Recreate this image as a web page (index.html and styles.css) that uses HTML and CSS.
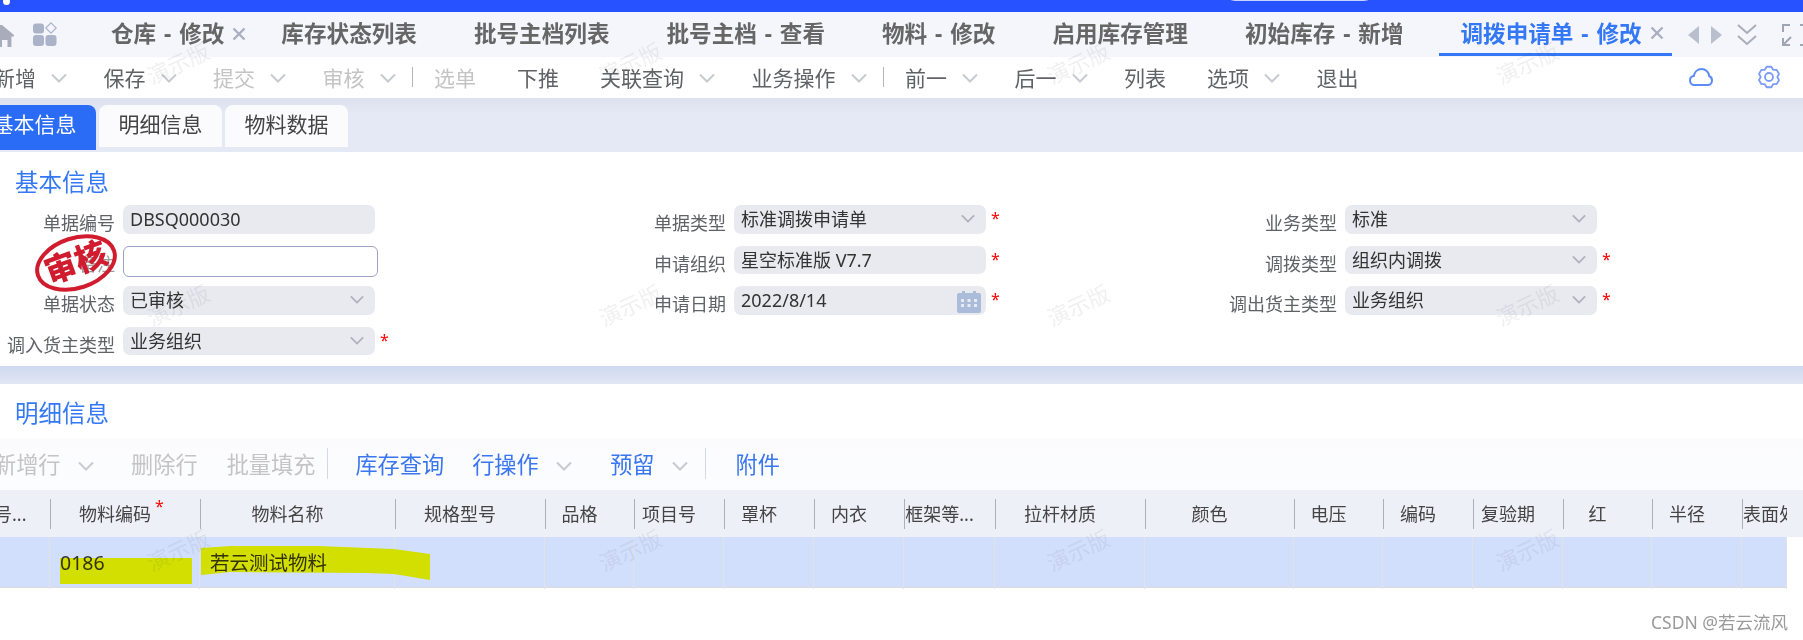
FILE: index.html
```html
<!DOCTYPE html>
<html lang="zh">
<head>
<meta charset="utf-8">
<title>调拨申请单 - 修改</title>
<link rel="stylesheet" href="styles.css">
</head>
<body>
<svg class="defs" width="0" height="0" aria-hidden="true">
  <symbol id="chev" viewBox="0 0 16 10"><polyline points="1,1.5 8,8.5 15,1.5" fill="none" stroke="currentColor" stroke-width="2"/></symbol>
  <symbol id="close" viewBox="0 0 14 14"><path d="M1.5 1.5 12.5 12.5M12.5 1.5 1.5 12.5" fill="none" stroke="currentColor" stroke-width="2.4"/></symbol>
</svg>
<div class="page">
  <div class="topbar"><span class="dot"></span><span class="search"></span></div>

  <nav class="tabbar">
    <svg class="home" width="14" height="22" viewBox="0 0 14 22"><path d="M2 0 14 10v1.5h-2.6V22H7.5v-7H2v7H-4V0z" fill="#a9adbb"/></svg>
    <svg class="apps" width="24" height="24" viewBox="0 0 24 24"><rect x="0" y="1.500" width="11" height="10" rx="3" fill="#aab3c8"/><rect x="0" y="13" width="11" height="11" rx="3" fill="#aab3c8"/><rect x="12.500" y="13" width="11" height="11" rx="3" fill="#aab3c8"/><path d="M18 .8 23.200 6 18 11.200 12.800 6z" fill="none" stroke="#aab3c8" stroke-width="1.200"/></svg>
    <div class="tabs">
      <div class="tab closable">仓库 - 修改<svg class="x" width="14" height="14"><use href="#close"/></svg></div>
      <div class="tab">库存状态列表</div>
      <div class="tab">批号主档列表</div>
      <div class="tab">批号主档 - 查看</div>
      <div class="tab">物料 - 修改</div>
      <div class="tab">启用库存管理</div>
      <div class="tab">初始库存 - 新增</div>
      <div class="tab active">调拨申请单 - 修改<svg class="x" width="14" height="14"><use href="#close"/></svg></div>
    </div>
    <div class="tabctl">
      <svg width="34" height="18" viewBox="0 0 34 18"><path d="M11 0V18L0 9z" fill="#b9bfcd"/><path d="M23 0V18L34 9z" fill="#b9bfcd"/></svg>
      <svg class="dbl" width="20" height="22" viewBox="0 0 20 22"><path d="M1 1 10 9 19 1M1 12 10 20 19 12" fill="none" stroke="#a9adb9" stroke-width="2"/></svg>
      <svg class="full" width="25" height="22" viewBox="0 0 25 22"><path d="M1 8V1H8M18 1H25M1 14V21H8M18 21H25M2 20 9 13" fill="none" stroke="#a0a5b4" stroke-width="2"/></svg>
    </div>
  </nav>

  <div class="toolbar">
    <div class="tool">新增<svg class="chev"><use href="#chev"/></svg></div>
    <div class="tool">保存<svg class="chev"><use href="#chev"/></svg></div>
    <div class="tool off">提交<svg class="chev"><use href="#chev"/></svg></div>
    <div class="tool off end">审核<svg class="chev"><use href="#chev"/></svg></div>
    <span class="sep"></span>
    <div class="tool off plain">选单</div>
    <div class="tool plain">下推</div>
    <div class="tool">关联查询<svg class="chev"><use href="#chev"/></svg></div>
    <div class="tool end">业务操作<svg class="chev"><use href="#chev"/></svg></div>
    <span class="sep"></span>
    <div class="tool">前一<svg class="chev"><use href="#chev"/></svg></div>
    <div class="tool">后一<svg class="chev"><use href="#chev"/></svg></div>
    <div class="tool plain">列表</div>
    <div class="tool">选项<svg class="chev"><use href="#chev"/></svg></div>
    <div class="tool">退出</div>
    <div class="toolicons">
      <svg width="24" height="18" viewBox="0 0 24 18"><path d="M6 17H5.500C2.900 17 1 15 1 12.500 1 10.200 2.600 8.400 4.800 8.100 5.500 4 8.600 1 12.500 1 16.600 1 19.800 4 20.200 8 22 8.800 23 10.500 23 12.500 23 15 21 17 18.500 17z" fill="none" stroke="#5d8bf5" stroke-width="2"/></svg>
      <svg width="24" height="24" viewBox="0 0 24 24"><path d="M9.640 1.770H14.360L16.150 4.810 19.680 4.840 22.040 8.930 20.300 12 22.040 15.070 19.680 19.160 16.150 19.190 14.360 22.230H9.640L7.850 19.190 4.320 19.160 1.960 15.070 3.700 12 1.960 8.930 4.320 4.840 7.850 4.810z" fill="none" stroke="#7a9cf5" stroke-width="1.800" stroke-linejoin="round"/><circle cx="12" cy="12" r="4" fill="none" stroke="#7a9cf5" stroke-width="1.800"/></svg>
    </div>
  </div>

  <div class="tabarea">
    <div class="ptab active">基本信息</div>
    <div class="ptab">明细信息</div>
    <div class="ptab">物料数据</div>
  </div>

  <section class="basic">
    <h2 class="title">基本信息</h2>
    <div class="form">
      <div class="item r1"><label>单据编号</label><div class="field">DBSQ000030</div></div>
      <div class="item r1"><label>单据类型</label><div class="field sel">标准调拨申请单<svg class="schev"><use href="#chev"/></svg></div><i class="req">*</i></div>
      <div class="item r1"><label>业务类型</label><div class="field sel">标准<svg class="schev"><use href="#chev"/></svg></div></div>

      <div class="item r2"><label class="faint">备注</label><div class="input"></div>
        <svg class="stamp" width="90" height="64" viewBox="0 0 90 64"><ellipse cx="45" cy="32" rx="40" ry="25" transform="rotate(-18 45 32)" fill="none" stroke="#d01c2e" stroke-width="4"/><text x="45" y="43" text-anchor="middle" transform="rotate(-20 45 32)" class="stamptext">审核</text></svg>
      </div>
      <div class="item r2"><label>申请组织</label><div class="field">星空标准版 V7.7</div><i class="req">*</i></div>
      <div class="item r2"><label>调拨类型</label><div class="field sel">组织内调拨<svg class="schev"><use href="#chev"/></svg></div><i class="req">*</i></div>

      <div class="item r3"><label>单据状态</label><div class="field sel">已审核<svg class="schev"><use href="#chev"/></svg></div></div>
      <div class="item r3"><label>申请日期</label><div class="field sel">2022/8/14<svg class="cal" width="24" height="22" viewBox="0 0 24 22"><path d="M2 2H5V0H8V2H16V0H19V2H22A2 2 0 0 1 24 4V20A2 2 0 0 1 22 22H2A2 2 0 0 1 0 20V4A2 2 0 0 1 2 2Z" fill="#aabcd9"/><path d="M4 8h3v3H4zM10.500 8h3v3h-3zM17 8h3v3h-3zM4 13h3v3H4zM10.500 13h3v3h-3zM17 13h3v3h-3z" fill="#e8eaf0"/></svg></div><i class="req">*</i></div>
      <div class="item r3"><label>调出货主类型</label><div class="field sel">业务组织<svg class="schev"><use href="#chev"/></svg></div><i class="req">*</i></div>

      <div class="item r4"><label>调入货主类型</label><div class="field sel">业务组织<svg class="schev"><use href="#chev"/></svg></div><i class="req">*</i></div>
    </div>
  </section>

  <div class="band"></div>

  <section class="detail">
    <h2 class="title">明细信息</h2>
    <div class="gridbar">
      <div class="gtool off g1">新增行<svg class="chev"><use href="#chev"/></svg></div>
      <div class="gtool off g2">删除行</div>
      <div class="gtool off g3">批量填充</div>
      <span class="gsep s1"></span>
      <div class="gtool g4">库存查询</div>
      <div class="gtool g5">行操作<svg class="chev"><use href="#chev"/></svg></div>
      <div class="gtool g6">预留<svg class="chev"><use href="#chev"/></svg></div>
      <span class="gsep s2"></span>
      <div class="gtool">附件</div>
    </div>
    <div class="thead cols">
      <div class="th first">号...</div>
      <div class="th">物料编码<i class="thstar">*</i></div>
      <div class="th">物料名称</div>
      <div class="th">规格型号</div>
      <div class="th">品格</div>
      <div class="th">项目号</div>
      <div class="th">罩杯</div>
      <div class="th">内衣</div>
      <div class="th">框架等...</div>
      <div class="th">拉杆材质</div>
      <div class="th">颜色</div>
      <div class="th">电压</div>
      <div class="th">编码</div>
      <div class="th">复验期</div>
      <div class="th">红</div>
      <div class="th">半径</div>
      <div class="th clip">表面处理</div>
    </div>
    <div class="trow cols">
      <div class="td"></div>
      <div class="td">0186</div>
      <div class="td">若云测试物料</div>
      <div class="td"></div><div class="td"></div><div class="td"></div><div class="td"></div><div class="td"></div>
      <div class="td"></div><div class="td"></div><div class="td"></div><div class="td"></div><div class="td"></div>
      <div class="td"></div><div class="td"></div><div class="td"></div><div class="td"></div>
      <svg class="marker" width="440" height="51" viewBox="0 0 440 51"><rect x="60" y="21" width="132" height="26" fill="#d4e000"/><polygon points="201,11 231,9 318,9 394,12 430,17 430,43 394,37 367,36 230,35 201,38" fill="#d4e000"/></svg>
    </div>
  </section>

  <div class="credit">CSDN @若云流风</div>

  <div class="wm" style="left:143px;top:45px">演示版</div>
  <div class="wm" style="left:595px;top:45px">演示版</div>
  <div class="wm" style="left:1043px;top:45px">演示版</div>
  <div class="wm" style="left:1492px;top:45px">演示版</div>
  <div class="wm" style="left:143px;top:287px">演示版</div>
  <div class="wm" style="left:595px;top:287px">演示版</div>
  <div class="wm" style="left:1043px;top:287px">演示版</div>
  <div class="wm" style="left:1492px;top:287px">演示版</div>
  <div class="wm" style="left:143px;top:532px">演示版</div>
  <div class="wm" style="left:595px;top:532px">演示版</div>
  <div class="wm" style="left:1043px;top:532px">演示版</div>
  <div class="wm" style="left:1492px;top:532px">演示版</div>
</div>
</body>
</html>
```
FILE: styles.css
```css
* { box-sizing: border-box; }
html, body { margin: 0; padding: 0; background: #fff; }
body { font-family: "Noto Sans", "Noto Sans CJK SC", sans-serif; color: #333; }
.defs { position: absolute; }
.page { position: relative; width: 1803px; height: 640px; overflow: hidden; }

.topbar { position: relative; height: 12px; background: #2652ff; overflow: hidden; }
.dot { position: absolute; left: 3px; top: -2px; width: 7px; height: 7px; border-radius: 50%; background: #fff; }
.search { position: absolute; left: 1225px; top: -20px; width: 149px; height: 21px; border: 1px solid #c9d3ff; border-radius: 10px; }

.tabbar { display: flex; align-items: center; height: 45px; background: #f5f6fb; }
.home { flex: none; margin-top: 3px; }
.apps { flex: none; margin-left: 19px; margin-top: -1px; }
.tabs { display: flex; height: 45px; margin-left: 32px; gap: 27px; }
.tab { display: flex; align-items: center; height: 45px; padding: 0 8px 4px 22px; font-size: 22.600px; font-weight: 700; word-spacing: 2px; color: #666; white-space: nowrap; }
.tab.closable { margin-right: -22px; }
.tab .x { margin-left: 8px; color: #a9afc0; margin-top: 2px; }
.tab.active { color: #3478f6; border-bottom: 3px solid #3478f6; height: 44px; padding-bottom: 1px; }
.tabctl { position: relative; display: flex; align-items: center; margin-left: 16px; }
.tabctl .dbl { margin-left: 15px; }
.tabctl .full { margin-left: 25px; flex: none; }

.toolbar { display: flex; align-items: center; height: 41px; padding-bottom: 2px; margin-left: -6px; background: #fff; width: 1809px; font-size: 21px; color: #606266; }
.tool { display: flex; align-items: center; margin-right: 36.500px; white-space: nowrap; }
.tool.plain { margin-right: 41px; }
.tool.end { margin-right: 16.500px; }
.tool.off { color: #c4c4c4; }
.chev { width: 16px; height: 10px; margin-left: 15px; margin-top: 3px; color: #c8cad1; flex: none; }
.sep { width: 1px; height: 20px; background: #b5b5b5; margin-right: 21px; }
.toolicons { display: flex; align-items: center; margin-left: auto; gap: 44px; margin-right: 22px; }

.tabarea { display: flex; gap: 3px; height: 54px; padding-top: 7px; margin: 0; background: linear-gradient(#dde1ef, #e5e9f5 30%); }
.ptab { width: 123px; height: 42px; text-align: center; line-height: 38px; font-size: 21px; background: #fbfbfd; border-radius: 8px 8px 0 0; color: #444; }
.ptab.active { height: 45px; margin-left: -27px; background: #2a6cf6; color: #fff; }

.title { margin: 0; height: 34px; padding-left: 15px; font-size: 23.500px; font-weight: 400; line-height: 34px; color: #3478f6; }
.basic { height: 214px; padding-top: 13px; background: #fff; }
.basic .title { margin-bottom: 6px; }
.form { display: grid; grid-template-columns: repeat(3, 611px); grid-template-rows: 41px 40px 41px 28px; }
.item { position: relative; display: flex; align-items: flex-start; }
.item label { flex: none; width: 115px; margin-right: 8px; padding-top: 4px; text-align: right; font-size: 18px; line-height: 29px; color: #606266; white-space: nowrap; }
.item label.faint { color: #9a9a9a; }
.field { position: relative; width: 252px; height: 29px; padding-left: 7px; border-radius: 7px; background: #e8eaf0; font-size: 18px; line-height: 29px; color: #333; white-space: nowrap; }
.r2 .field, .r4 .field { height: 28px; line-height: 28px; }
.input { width: 255px; height: 31px; border: 1px solid #9aa3c4; border-radius: 6px; background: #fff; }
.schev { position: absolute; right: 11px; top: 9px; width: 14px; height: 9px; color: #aeb1b8; }
.cal { position: absolute; right: 5px; top: 5px; }
.req { margin-left: 5px; padding-top: 3px; font-size: 16px; font-style: normal; line-height: 20px; color: #f00; }
.stamp { position: absolute; left: 31px; top: -15px; }
.stamptext { font-size: 32px; font-weight: 900; fill: #d01c2e; }

.band { height: 18px; background: linear-gradient(#cfd9f0, #e2e6f4); }

.detail { background: #fff; }
.detail .title { height: 54px; line-height: 58px; }
.gridbar { display: flex; align-items: center; height: 52px; margin-left: -6px; width: 1809px; padding-bottom: 2px; background: linear-gradient(#fbfbfe, #fcfdff); font-size: 22.200px; color: #3a76f0; }
.gtool { display: flex; align-items: center; white-space: nowrap; }
.gtool .chev { margin-left: 17px; margin-top: 6px; }
.gtool.off { color: #c4c4c4; }
.g1 { margin-right: 37.500px; }
.g2 { margin-right: 29px; }
.g3 { margin-right: 12px; }
.g4 { margin-right: 28px; }
.g5 { margin-right: 38.500px; }
.g6 { margin-right: 17px; }
.gsep { width: 1px; height: 31px; background: #d6d8df; }
.s1 { margin-right: 27px; }
.s2 { margin-right: 30px; }

.cols { display: grid; grid-template-columns: 50px 150px 195px 150px 89px 90px 90px 90px 91px 150px 149px 89px 90px 90px 89px 90px 45px; }
.thead { height: 47px; align-items: center; background: #eef0f8; }
.th { position: relative; height: 30px; padding-right: 21px; border-left: 1px solid #aeb0b8; text-align: center; font-size: 18px; line-height: 30px; color: #444; white-space: nowrap; }
.th.first { border-left: 0; padding: 0; margin-left: -6px; text-align: left; }
.th.clip { overflow: hidden; padding: 0; text-align: left; }
.thstar { position: absolute; left: 104px; top: -8px; font-size: 16px; font-style: normal; color: #f00; }
.trow { position: relative; width: 1787px; height: 51px; background: #d2dffc; border-bottom: 1px solid #dcdcdc; }
.td { padding-left: 10px; border-right: 1px solid #e0e2e8; font-size: 19.500px; line-height: 52px; color: #333; white-space: nowrap; }
.marker { position: absolute; left: 0; top: 0; mix-blend-mode: darken; }

.credit { margin-top: 22px; padding-right: 15px; text-align: right; font-size: 17.500px; line-height: 24px; color: #9a9a9a; }

.wm { position: absolute; width: 70px; font-size: 22px; line-height: 36px; text-align: center; white-space: nowrap; color: rgba(40, 40, 60, .07); transform: rotate(-25deg); pointer-events: none; }
```
